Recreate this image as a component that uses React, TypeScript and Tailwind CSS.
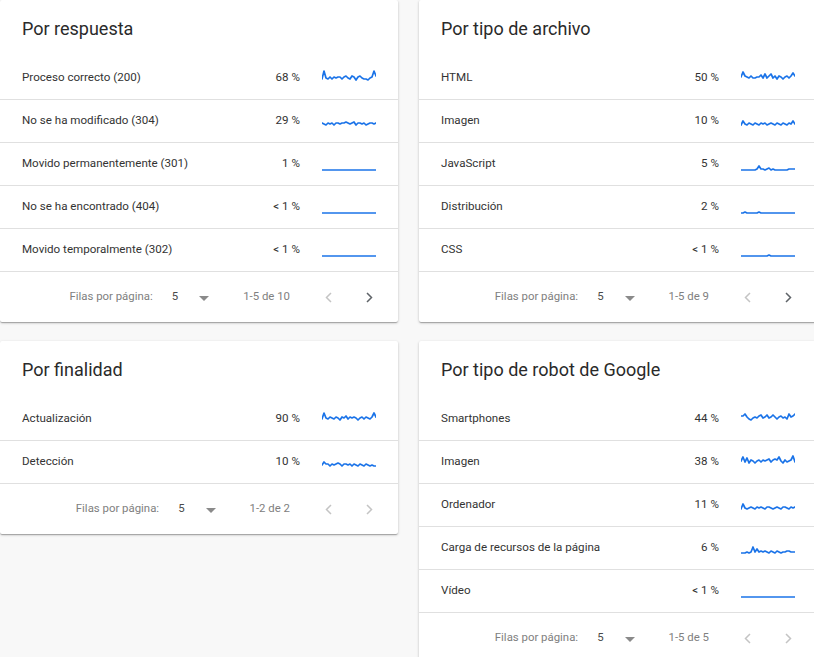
import React from 'react';

type Row = { label: string; pct: string; line: number[] };

type CardData = {
  title: string;
  rows: Row[];
  range: string;
  nextEnabled: boolean;
};

const flat = (n = 28) => Array.from({ length: n }, () => 14);

const cards: CardData[] = [
  {
    title: 'Por respuesta',
    range: '1-5 de 10',
    nextEnabled: true,
    rows: [
      { label: 'Proceso correcto (200)', pct: '68 %', line: [9, 1, 8, 9, 7, 9, 7, 8, 7, 7, 9, 7, 6, 8, 9, 6, 7, 10, 7, 6, 8, 9, 9, 10, 8, 7, 1, 6] },
      { label: 'No se ha modificado (304)', pct: '29 %', line: [10, 11, 12, 10, 11, 10, 12, 10, 10, 11, 10, 10, 9, 10, 11, 10, 9, 12, 10, 10, 11, 10, 12, 11, 10, 10, 11, 10] },
      { label: 'Movido permanentemente (301)', pct: '1 %', line: flat() },
      { label: 'No se ha encontrado (404)', pct: '< 1 %', line: flat() },
      { label: 'Movido temporalmente (302)', pct: '< 1 %', line: flat() },
    ],
  },
  {
    title: 'Por tipo de archivo',
    range: '1-5 de 9',
    nextEnabled: true,
    rows: [
      { label: 'HTML', pct: '50 %', line: [7, 2, 6, 7, 8, 6, 8, 8, 7, 7, 5, 8, 4, 8, 6, 4, 8, 6, 9, 6, 7, 9, 7, 6, 8, 6, 3, 6] },
      { label: 'Imagen', pct: '10 %', line: [12, 8, 11, 12, 10, 11, 12, 10, 11, 12, 10, 11, 10, 12, 11, 10, 11, 12, 10, 11, 12, 10, 11, 12, 10, 11, 8, 11] },
      { label: 'JavaScript', pct: '5 %', line: [14, 14, 14, 14, 14, 14, 14, 14, 13, 10, 13, 13, 14, 13, 12, 14, 13, 14, 14, 14, 14, 14, 14, 14, 13, 13, 13, 13] },
      { label: 'Distribución', pct: '2 %', line: [14, 14, 13, 14, 14, 14, 14, 14, 14, 13, 14, 14, 14, 14, 14, 14, 14, 14, 14, 14, 14, 14, 14, 14, 14, 14, 14, 14] },
      { label: 'CSS', pct: '< 1 %', line: flat().map((v, i) => (i === 14 ? 13 : v)) },
    ],
  },
  {
    title: 'Por finalidad',
    range: '1-2 de 2',
    nextEnabled: false,
    rows: [
      { label: 'Actualización', pct: '90 %', line: [8, 2, 7, 8, 6, 7, 8, 6, 7, 9, 6, 7, 5, 8, 6, 7, 6, 7, 9, 7, 6, 8, 6, 7, 8, 6, 2, 6] },
      { label: 'Detección', pct: '10 %', line: [11, 8, 10, 10, 12, 10, 11, 10, 9, 10, 12, 10, 10, 11, 10, 12, 10, 11, 12, 10, 11, 12, 10, 11, 12, 11, 12, 12] },
    ],
  },
  {
    title: 'Por tipo de robot de Google',
    range: '1-5 de 5',
    nextEnabled: false,
    rows: [
      { label: 'Smartphones', pct: '44 %', line: [5, 5, 3, 6, 8, 9, 7, 6, 7, 5, 4, 7, 6, 4, 7, 6, 4, 6, 8, 6, 5, 7, 6, 8, 3, 6, 5, 3] },
      { label: 'Imagen', pct: '38 %', line: [7, 3, 8, 4, 9, 6, 7, 9, 7, 6, 8, 6, 7, 6, 5, 8, 6, 5, 6, 3, 7, 9, 6, 8, 7, 6, 2, 8] },
      { label: 'Ordenador', pct: '11 %', line: [12, 7, 11, 12, 11, 10, 11, 12, 10, 11, 10, 11, 12, 10, 10, 11, 12, 11, 10, 11, 12, 10, 10, 11, 12, 10, 11, 10] },
      { label: 'Carga de recursos de la página', pct: '6 %', line: [13, 13, 13, 12, 13, 12, 7, 12, 9, 12, 11, 12, 11, 12, 13, 11, 12, 13, 11, 12, 13, 12, 12, 11, 11, 12, 12, 12] },
      { label: 'Vídeo', pct: '< 1 %', line: flat() },
    ],
  },
];

function Sparkline({ values }: { values: number[] }) {
  const step = 54 / (values.length - 1);
  const d = values.map((v, i) => `${(i * step).toFixed(2)},${v}`).join(' ');
  return (
    <svg width="54" height="16" viewBox="0 0 54 16" className="shrink-0">
      <polyline points={d} fill="none" stroke="#1a73e8" strokeWidth="1.7" strokeLinejoin="round" strokeLinecap="round" />
    </svg>
  );
}

function Chevron({ dir, enabled }: { dir: 'left' | 'right'; enabled: boolean }) {
  const pts = dir === 'left' ? '7,1 2.5,5.5 7,10' : '3,1 7.5,5.5 3,10';
  return (
    <div className="w-6 h-6 flex items-center justify-center">
      <svg width="10" height="11" viewBox="0 0 10 11">
        <polyline points={pts} fill="none" stroke={enabled ? '#5f6368' : '#c4c4c4'} strokeWidth="1.5" />
      </svg>
    </div>
  );
}

function Card({ card }: { card: CardData }) {
  return (
    <div className="w-[398px] bg-white rounded-[2px] shadow-[0_1px_3px_rgba(0,0,0,0.2),0_1px_1px_rgba(0,0,0,0.14),0_2px_1px_-1px_rgba(0,0,0,0.12)]">
      <div className="h-[57px] flex items-center pl-[22px] text-[18px] text-[#2a2a2a]">
        {card.title}
      </div>
      {card.rows.map((row) => (
        <div key={row.label} className="h-[43px] flex items-center pl-[22px] pr-[22px] border-b border-[#e0e0e0]">
          <span className="flex-1 text-[11.6px] text-[#333333]">{row.label}</span>
          <span className="text-[11.6px] text-[#333333]">{row.pct}</span>
          <div className="ml-[22px]">
            <Sparkline values={row.line} />
          </div>
        </div>
      ))}
      <div className="h-[50px] flex items-center justify-end pr-[17px] text-[11.4px] text-[#808080]">
        <span>Filas por página:</span>
        <span className="ml-[19px] text-[#4a4a4a]">5</span>
        <svg width="10" height="5" viewBox="0 0 10 5" className="ml-[21px] mt-[3px]">
          <polygon points="0,0 10,0 5,5" fill="#8a8a8a" />
        </svg>
        <span className="ml-[34px]">{card.range}</span>
        <div className="ml-[27px]">
          <Chevron dir="left" enabled={false} />
        </div>
        <div className="ml-[16px]">
          <Chevron dir="right" enabled={card.nextEnabled} />
        </div>
      </div>
    </div>
  );
}

export default function App() {
  return (
    <div className="w-[814px] h-[657px] overflow-hidden bg-[#f8f8f8] font-['Roboto',sans-serif]">
      <div className="flex gap-[21px]">
        <div className="flex flex-col gap-[19px]">
          <Card card={cards[0]} />
          <Card card={cards[2]} />
        </div>
        <div className="flex flex-col gap-[19px]">
          <Card card={cards[1]} />
          <Card card={cards[3]} />
        </div>
      </div>
    </div>
  );
}
